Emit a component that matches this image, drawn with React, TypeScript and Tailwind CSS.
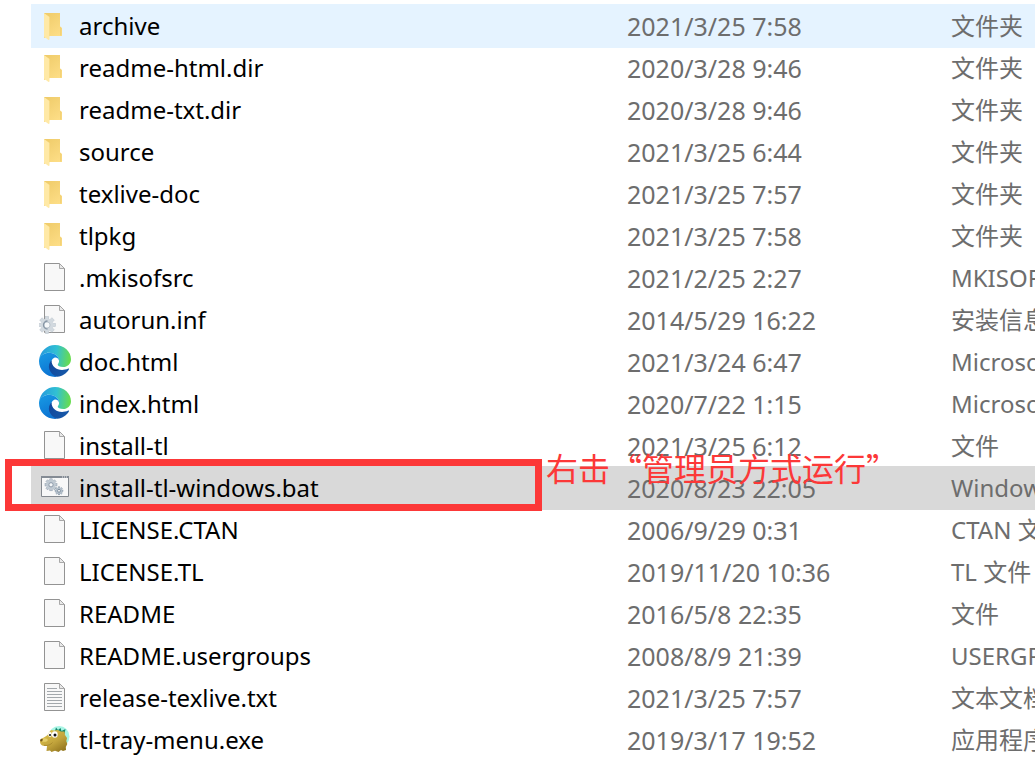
import React from "react";

type Kind = "folder" | "file" | "inf" | "edge" | "bat" | "txt" | "exe";

type Entry = {
  name: string;
  date: string;
  type: string;
  kind: Kind;
  state?: "hover" | "selected";
};

const entries: Entry[] = [
  { name: "archive", date: "2021/3/25 7:58", type: "文件夹", kind: "folder", state: "hover" },
  { name: "readme-html.dir", date: "2020/3/28 9:46", type: "文件夹", kind: "folder" },
  { name: "readme-txt.dir", date: "2020/3/28 9:46", type: "文件夹", kind: "folder" },
  { name: "source", date: "2021/3/25 6:44", type: "文件夹", kind: "folder" },
  { name: "texlive-doc", date: "2021/3/25 7:57", type: "文件夹", kind: "folder" },
  { name: "tlpkg", date: "2021/3/25 7:58", type: "文件夹", kind: "folder" },
  { name: ".mkisofsrc", date: "2021/2/25 2:27", type: "MKISOFSRC 文件", kind: "file" },
  { name: "autorun.inf", date: "2014/5/29 16:22", type: "安装信息", kind: "inf" },
  { name: "doc.html", date: "2021/3/24 6:47", type: "Microsoft Edge HTML Document", kind: "edge" },
  { name: "index.html", date: "2020/7/22 1:15", type: "Microsoft Edge HTML Document", kind: "edge" },
  { name: "install-tl", date: "2021/3/25 6:12", type: "文件", kind: "file" },
  { name: "install-tl-windows.bat", date: "2020/8/23 22:05", type: "Windows 批处理文件", kind: "bat", state: "selected" },
  { name: "LICENSE.CTAN", date: "2006/9/29 0:31", type: "CTAN 文件", kind: "file" },
  { name: "LICENSE.TL", date: "2019/11/20 10:36", type: "TL 文件", kind: "file" },
  { name: "README", date: "2016/5/8 22:35", type: "文件", kind: "file" },
  { name: "README.usergroups", date: "2008/8/9 21:39", type: "USERGROUPS 文件", kind: "file" },
  { name: "release-texlive.txt", date: "2021/3/25 7:57", type: "文本文档", kind: "txt" },
  { name: "tl-tray-menu.exe", date: "2019/3/17 19:52", type: "应用程序", kind: "exe" },
];

const rowStyles = {
  hover: "bg-[#e5f3ff] shadow-[0_1px_0_#e5f3ff,0_-1px_0_#e5f3ff]",
  selected: "bg-[#d9d9d9] shadow-[0_1px_0_#d9d9d9,0_-1px_0_#d9d9d9]",
};

function Gear({ cx, cy, r, fill, stroke, hole }: { cx: number; cy: number; r: number; fill: string; stroke: string; hole: string }) {
  return (
    <g>
      {[0, 45, 90, 135].map((a) => (
        <rect
          key={a}
          x={cx - r}
          y={cy - r * 0.2}
          width={r * 2}
          height={r * 0.4}
          fill={fill}
          stroke={stroke}
          strokeWidth={0.5}
          transform={`rotate(${a} ${cx} ${cy})`}
        />
      ))}
      <circle cx={cx} cy={cy} r={r * 0.76} fill={fill} />
      <circle cx={cx} cy={cy} r={r * 0.36} fill={hole} stroke={stroke} strokeWidth={1} />
    </g>
  );
}

function Page({ lined }: { lined?: boolean }) {
  return (
    <g>
      <path d="M5.5 2.5H20.5L25.5 7.5V29.5H5.5Z" fill="#f8f8f8" stroke="#939393" />
      <path d="M20.5 2.5V7.5H25.5Z" fill="#e9e9e9" stroke="#a0a0a0" strokeWidth={0.9} />
      {lined && (
        <path d="M8 7.5H18M8 10.5H23M8 13.5H23M8 16.5H23M8 19.5H23M8 22.5H23M8 25.5H23" stroke="#a3a8ac" />
      )}
    </g>
  );
}

function FileIcon({ kind, id }: { kind: Kind; id: string }) {
  return (
    <svg className="mb-0.5 size-8 shrink-0" viewBox="0 0 32 32" fill="none" aria-hidden="true">
      {kind === "folder" && (
        <>
          <defs>
            <linearGradient id={`${id}a`} x1="6" y1="4" x2="24" y2="28" gradientUnits="userSpaceOnUse">
              <stop stopColor="#efcb69" />
              <stop offset="1" stopColor="#ffe08a" />
            </linearGradient>
          </defs>
          <path d="M5 4H21V17.5L23 19V27H11L5 29Z" fill={`url(#${id}a)`} />
          <path d="M21 17.5L22.5 19V26.5H21Z" fill="#f3d276" />
          <path d="M5 4L10.5 8V30.5L9.5 31L5 27.5Z" fill="#ffe9a6" />
          <path d="M10.5 8V27" stroke="#f7d983" strokeWidth={0.6} />
        </>
      )}
      {(kind === "file" || kind === "inf") && <Page />}
      {kind === "txt" && <Page lined />}
      {kind === "inf" && (
        <>
          <Gear cx={8} cy={22} r={8.6} fill="#d2d9df" stroke="#b9c3cc" hole="#f6f8f9" />
          <path d="M8.5 18A4 4 0 0 0 8.5 26" stroke="#8796a5" strokeWidth={1.3} />
        </>
      )}
      {kind === "edge" && (
        <>
          <defs>
            <linearGradient id={`${id}a`} x1="3" y1="9" x2="31" y2="12" gradientUnits="userSpaceOnUse">
              <stop stopColor="#279fdc" />
              <stop offset="0.5" stopColor="#31c0d3" />
              <stop offset="1" stopColor="#67dc50" />
            </linearGradient>
            <linearGradient id={`${id}b`} x1="5" y1="12" x2="14" y2="32" gradientUnits="userSpaceOnUse">
              <stop stopColor="#1592e0" />
              <stop offset="1" stopColor="#0b6fd0" />
            </linearGradient>
            <linearGradient id={`${id}c`} x1="10" y1="20" x2="29" y2="27" gradientUnits="userSpaceOnUse">
              <stop stopColor="#11489c" />
              <stop offset="1" stopColor="#1759a9" />
            </linearGradient>
          </defs>
          <path d="M0.2 14.5C1.2 6.2 7.8 0 16 0C25.2 0 32 6.8 32 14.2C32 19.1 28.3 22 24.3 22C20.7 22 18.7 20.8 18.7 19.8C18.7 19 20.1 18.2 20.1 15.8C20.1 11.5 15.8 7.7 10 7.7C5.7 7.7 2.1 10 0.2 14.5Z" fill={`url(#${id}a)`} />
          <path d="M0 16C0.2 11.3 4.5 7.7 10 7.7C15.8 7.7 20.1 11.5 20.1 15.8C19.2 13.2 17.2 12 15.3 12.8C10.5 15 9.3 25 18.2 31.8C8.3 33 0 25.5 0 16Z" fill={`url(#${id}b)`} />
          <path d="M12.6 15.3C7.4 20.2 9.8 29 18.2 31.8C23.6 31.2 27.8 28.2 30 24.2C30.3 23.6 29.9 23.2 29.3 23.5C21.5 27.2 12.2 23.5 12.6 15.3Z" fill={`url(#${id}c)`} />
        </>
      )}
      {kind === "bat" && (
        <>
          <path d="M2.5 5.5H29.5V25.5H2.5Z" fill="#f8f8f8" stroke="#84898f" />
          <path d="M2 5H30V7H2Z" fill="#848b94" />
          <path d="M23 6H24M25 6H26M27 6H28" stroke="#e8eaed" />
          <Gear cx={12} cy={13.8} r={6} fill="#c0cad3" stroke="#8d9baa" hole="#f4f6f8" />
          <Gear cx={20} cy={19.8} r={4} fill="#b4c0cb" stroke="#8292a2" hole="#f4f6f8" />
        </>
      )}
      {kind === "exe" && (
        <>
          <defs>
            <linearGradient id={`${id}a`} x1="8" y1="7" x2="22" y2="29" gradientUnits="userSpaceOnUse">
              <stop stopColor="#dcc14c" />
              <stop offset="0.55" stopColor="#c2a43c" />
              <stop offset="1" stopColor="#94771f" />
            </linearGradient>
          </defs>
          <circle cx="20" cy="13.5" r="10.5" fill="#a9f5e5" />
          <path d="M16 8L17 4.5L19 7L21.5 5L22.5 8L26.5 6L25.5 11Z" fill="#13856a" />
          <path d="M10 9.5L12 7L15 7.5L19 7L22 8.5L25.5 8.5L26 12L28 15L27.3 18L28.3 21L26.8 24L27 27L24 28L22 27L19.5 29L16 27.8L12.5 29L11 27.5L7.5 28L8 23C4 23.5 1 22 1 18.5C1 15 6.5 14.5 8.5 12Z" fill={`url(#${id}a)`} />
          <ellipse cx="5.5" cy="17" rx="3.2" ry="1.8" fill="#e6cf6a" />
          <path d="M1.2 18C1 16 2.5 15.2 3.8 16.2C3.8 18 2.5 19 1.2 18Z" fill="#72561b" />
          <path d="M5 22.3C9 23 12 21.5 13.5 19.5" stroke="#a3852a" strokeWidth={0.8} />
          <ellipse cx="11" cy="11.5" rx="1.8" ry="2.4" fill="#fff" />
          <ellipse cx="15.8" cy="11.5" rx="2.9" ry="3.2" fill="#fff" />
          <circle cx="11" cy="12" r="1" fill="#111" />
          <circle cx="16" cy="12" r="1.5" fill="#111" />
        </>
      )}
    </svg>
  );
}

export default function App() {
  return (
    <main className="relative overflow-hidden bg-white pt-[5px] pb-[5px] pl-[31px] font-['Noto_Sans','Noto_Sans_CJK_SC',sans-serif] text-[24px] leading-[42px]">
      <table className="w-full table-fixed border-separate border-spacing-0 whitespace-nowrap">
        <colgroup>
          <col className="w-[596px]" />
          <col className="w-[324px]" />
          <col />
        </colgroup>
        <tbody>
          {entries.map((e, i) => (
            <tr key={e.name} className={e.state ? rowStyles[e.state] : ""}>
              <td className="p-0">
                <div className="flex h-[42px] items-center gap-2 pl-2 text-black">
                  <FileIcon kind={e.kind} id={`icon${i}`} />
                  <span>{e.name}</span>
                </div>
              </td>
              <td className="h-[42px] p-0 text-[25px] text-[#6d6d6d]">{e.date}</td>
              <td className="h-[42px] p-0 text-[#6d6d6d]">{e.type}</td>
            </tr>
          ))}
        </tbody>
      </table>
      <div className="absolute top-[459px] left-[5px] h-[52px] w-[537px] border-[7px] border-[#fc3838]" />
      <p className="absolute top-[446px] left-[546px] font-['Noto_Sans_CJK_SC',sans-serif] text-[32px] whitespace-nowrap text-[#fc3838]" lang="zh-CN">
        右击“管理员方式运行”
      </p>
    </main>
  );
}
